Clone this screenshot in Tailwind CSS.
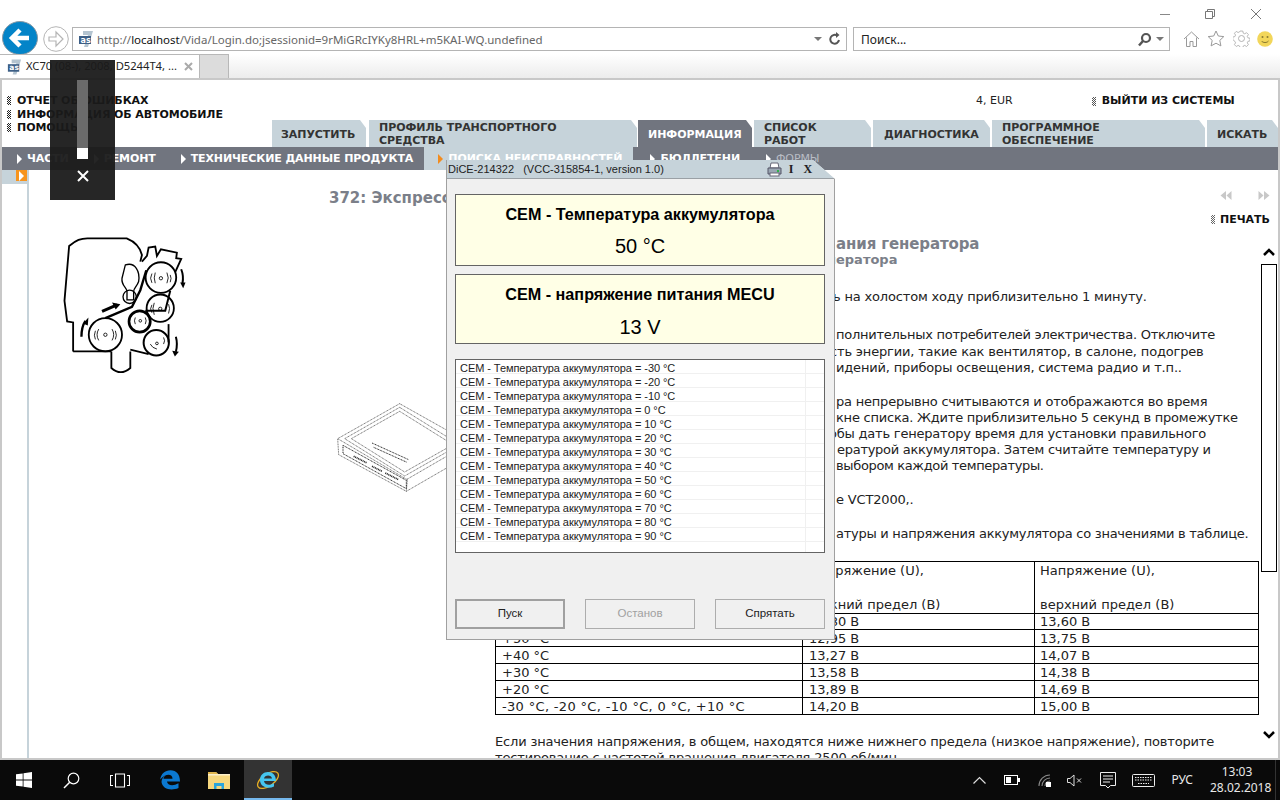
<!DOCTYPE html>
<html lang="ru">
<head>
<meta charset="UTF-8">
<title>VIDA</title>
<script src="https://cdn.jsdelivr.net/npm/@tailwindcss/browser@4"></script>
</head>
<body class="relative w-[1280px] h-[800px] overflow-hidden flex flex-col bg-white font-['DejaVu_Sans',sans-serif] text-black">

<!-- browser chrome -->
<div class="h-[54px] flex items-start font-['Noto_Sans',sans-serif] shrink-0">
  <svg class="ml-[2px] mt-[21px] shrink-0" width="36" height="34" viewBox="0 0 36 34"><ellipse cx="18" cy="17" rx="17.5" ry="16.5" fill="#0484c8" stroke="#8a9aa5" stroke-width="1"/><path d="M27 17H11M18 9l-8 8 8 8" fill="none" stroke="#fff" stroke-width="4.5"/></svg>
  <svg class="ml-[5px] mt-[26px] shrink-0" width="26" height="26" viewBox="0 0 26 26"><circle cx="13" cy="13" r="12.3" fill="#fff" stroke="#b5b5b5"/><path d="M6 11h7V6l7 7-7 7v-5H6z" fill="none" stroke="#b5b5b5" stroke-width="1.2"/></svg>
  <div class="ml-[3px] mt-[27px] w-[775px] h-[24px] border border-[#b4b4b4] flex items-center pl-[4px] pr-[4px] text-[11.5px] text-[#666] shrink-0">
    <svg width="18" height="18" viewBox="0 0 18 18" class="shrink-0"><path d="M6 1h10l-5 16H7l4-12H6z" fill="#b4c4d0"/><rect x="2" y="6" width="12" height="8" fill="#3d5f86"/><text x="3.5" y="12.5" font-size="8" font-weight="700" fill="#fff" font-family="DejaVu Sans">as</text></svg>
    <span class="ml-[2px] pt-[1px] whitespace-nowrap">http://<span class="text-[#111]">localhost</span>/Vida/Login.do;jsessionid=9rMiGRcIYKy8HRL+m5KAI-WQ.undefined</span>
    <span class="ml-auto w-0 h-0 border-x-[4px] border-x-transparent border-t-[4px] border-t-[#777]"></span>
    <svg class="ml-[6px]" width="14" height="16" viewBox="0 0 14 16"><path d="M11 9a4.4 4.4 0 1 1-1.6-4.2" fill="none" stroke="#555" stroke-width="2"/><path d="M8 1v6l3.500-3z" fill="#555"/></svg>
  </div>
  <div class="ml-[6px] mt-[27px] w-[317px] h-[24px] border border-[#b4b4b4] flex items-center pl-[7px] pr-[5px] text-[12px] text-[#222] shrink-0">
    <span class="pt-[1px]">Поиск...</span>
    <svg class="ml-auto" width="15" height="15" viewBox="0 0 15 15"><circle cx="9" cy="6" r="4" fill="none" stroke="#555" stroke-width="2.200"/><path d="M6 9l-4 4.500" stroke="#555" stroke-width="2.500"/></svg>
    <span class="ml-[4px] w-0 h-0 border-x-[4px] border-x-transparent border-t-[4px] border-t-[#777]"></span>
  </div>
  <div class="flex-1 relative h-full">
    <div class="flex items-start mt-[9px] ml-[-10px] h-[11px]">
      <span class="ml-[0px] mt-[5px] w-[10px] h-px bg-[#888]"></span>
      <svg class="ml-[35px]" width="10" height="10" viewBox="0 0 10 10"><path d="M.5 2.500h7v7h-7zM2.500 2.500v-2h7v7h-2" fill="none" stroke="#777"/></svg>
      <svg class="ml-[36px]" width="10" height="10" viewBox="0 0 10 10"><path d="M0 0l10 10M10 0L0 10" stroke="#777"/></svg>
    </div>
    <div class="flex items-center mt-[10px] ml-[13px]">
      <svg width="17" height="16" viewBox="0 0 16 16"><path d="M.5 8L8 1l7.500 7M3 6.500v9h3.500v-5h3v5H13v-9" fill="none" stroke="#999"/></svg>
      <svg class="ml-[7px]" width="18" height="17" viewBox="0 0 17 17"><path d="M8.500 1l2.300 5 5.500.6-4 3.800 1.100 5.500-4.900-2.700-4.900 2.700 1.100-5.500-4-3.800 5.500-.6z" fill="none" stroke="#999"/></svg>
      <svg class="ml-[8px]" width="17" height="17" viewBox="0 0 17 17"><path d="M7 .7h3l.5 2.300 1.600.7 2-1.200 2 2-1.200 2 .7 1.600 2.300.5-.1 2.800-2.200.5-.7 1.600 1.200 2-2 2-2-1.200-1.600.7-.5 2.200H7l-.5-2.200-1.600-.7-2 1.200-2-2 1.200-2-.7-1.600L-.9 10V7.200l2.300-.5.7-1.600-1.200-2 2-2 2 1.200 1.600-.7z" transform="translate(.6 .4) scale(.92)" fill="none" stroke="#aaa" stroke-width=".9"/><circle cx="8.500" cy="8.500" r="3" fill="none" stroke="#aaa" stroke-width=".9"/></svg>
      <svg class="ml-[7px]" width="16" height="16" viewBox="0 0 16 16"><circle cx="8" cy="8" r="7.800" fill="#f2d65a"/><circle cx="5.500" cy="6" r="1" fill="#8a7a30"/><circle cx="10.500" cy="6" r="1" fill="#8a7a30"/><path d="M4.500 10c1.500 2 5.500 2 7 0" fill="none" stroke="#8a7a30"/></svg>
    </div>
  </div>
</div>
<div class="h-[24px] flex bg-gradient-to-b from-white to-[#ececec] font-['Noto_Sans',sans-serif] shrink-0">
  <div class="w-[200px] bg-white border-r border-t border-[#b8b8b8] flex items-center pl-[6px] text-[11.2px] text-[#222]">
    <svg width="17" height="18" viewBox="0 0 18 18" class="shrink-0"><path d="M6 1h10l-5 16H7l4-12H6z" fill="#b4c4d0"/><rect x="2" y="6" width="12" height="8" fill="#3d5f86"/><text x="3.500" y="12.500" font-size="8" font-weight="700" fill="#fff" font-family="DejaVu Sans">as</text></svg>
    <span class="ml-[3px] whitespace-nowrap">XC70 (08-), 2008, D5244T4, ...</span>
    <svg class="ml-[7px]" width="9" height="9" viewBox="0 0 9 9"><path d="M1 1l7 7M8 1L1 8" stroke="#aaa" stroke-width="2"/></svg>
  </div>
  <div class="w-[29px] bg-[#dcdcdc] border-r border-t border-[#b8b8b8]"></div>
</div>

<!-- page -->
<div class="flex-1 min-h-0 flex flex-col border-x-2 border-y-2 border-[#c8c8c8]">
  <div class="h-[67px] flex shrink-0">
    <div class="w-[270px] pt-[14px] pl-[5px] text-[11px] font-bold leading-[13.500px] tracking-[-0.08px] text-[#111]">
      <div class="flex items-center gap-[6px]"><span class="w-[4px] h-[9px] bg-[length:2px_2px] bg-[conic-gradient(#222_25%,transparent_0_50%,#222_0_75%,transparent_0)]"></span>ОТЧЕТ ОБ ОШИБКАХ</div>
      <div class="flex items-center gap-[6px]"><span class="w-[4px] h-[9px] bg-[length:2px_2px] bg-[conic-gradient(#222_25%,transparent_0_50%,#222_0_75%,transparent_0)]"></span>ИНФОРМАЦИЯ ОБ АВТОМОБИЛЕ</div>
      <div class="flex items-center gap-[6px]"><span class="w-[4px] h-[9px] bg-[length:2px_2px] bg-[conic-gradient(#222_25%,transparent_0_50%,#222_0_75%,transparent_0)]"></span>ПОМОЩЬ</div>
    </div>
    <div class="flex-1 flex flex-col">
      <div class="h-[40px] flex items-start pt-[14px] text-[11px] leading-[14px]">
        <span class="ml-[704px] text-[#222]">4, EUR</span>
        <span class="ml-[79px] w-[4px] h-[9px] mt-[3px] bg-[length:2px_2px] bg-[conic-gradient(#555_25%,transparent_0_50%,#555_0_75%,transparent_0)]"></span>
        <span class="ml-[6px] font-bold whitespace-nowrap text-[#111]">ВЫЙТИ ИЗ СИСТЕМЫ</span>
      </div>
      <div class="h-[27px] flex text-[11px] font-bold leading-[13px] tracking-[-0.05px] text-[#333]">
        <div class="w-[94px] pl-[9px] pt-[1px] flex items-center bg-[#c6d3da] [clip-path:polygon(0_0,calc(100%-6px)_0,100%_8px,100%_100%,0_100%)]">ЗАПУСТИТЬ</div>
        <div class="ml-[3px] w-[268px] pl-[10px] flex items-center bg-[#c6d3da] [clip-path:polygon(0_0,calc(100%-6px)_0,100%_8px,100%_100%,0_100%)]">ПРОФИЛЬ ТРАНСПОРТНОГО<br>СРЕДСТВА</div>
        <div class="ml-[1px] w-[114px] pl-[10px] pt-[1px] flex items-center bg-[#71757f] text-white [clip-path:polygon(0_0,calc(100%-6px)_0,100%_8px,100%_100%,0_100%)]">ИНФОРМАЦИЯ</div>
        <div class="ml-[2px] w-[117px] pl-[10px] flex items-center bg-[#c6d3da] [clip-path:polygon(0_0,calc(100%-6px)_0,100%_8px,100%_100%,0_100%)]">СПИСОК<br>РАБОТ</div>
        <div class="ml-[2px] w-[117px] pl-[11px] pt-[1px] flex items-center bg-[#c6d3da] [clip-path:polygon(0_0,calc(100%-6px)_0,100%_8px,100%_100%,0_100%)]">ДИАГНОСТИКА</div>
        <div class="ml-[2px] w-[213px] pl-[10px] flex items-center bg-[#c6d3da] [clip-path:polygon(0_0,calc(100%-6px)_0,100%_8px,100%_100%,0_100%)]">ПРОГРАММНОЕ<br>ОБЕСПЕЧЕНИЕ</div>
        <div class="ml-[2px] flex-1 pl-[10px] pt-[1px] flex items-center bg-[#c6d3da] [clip-path:polygon(0_0,calc(100%-6px)_0,100%_8px,100%_100%,0_100%)]">ИСКАТЬ</div>
      </div>
    </div>
  </div>
  <div class="h-[23px] flex items-stretch bg-[#71757f] text-white text-[11px] font-bold tracking-[-0.1px] shrink-0 whitespace-nowrap">
    <div class="ml-[15px] pt-[1px] flex items-center gap-[5px]"><span class="w-0 h-0 border-y-[5px] border-y-transparent border-l-[5px] border-l-white"></span>ЧАСТИ</div>
    <div class="ml-[25px] pt-[1px] flex items-center gap-[5px]"><span class="w-0 h-0 border-y-[5px] border-y-transparent border-l-[5px] border-l-white"></span>РЕМОНТ</div>
    <div class="ml-[25px] pt-[1px] flex items-center gap-[5px]"><span class="w-0 h-0 border-y-[5px] border-y-transparent border-l-[5px] border-l-white"></span>ТЕХНИЧЕСКИЕ ДАННЫЕ ПРОДУКТА</div>
    <div class="ml-[11px] pl-[14px] pr-[11px] pt-[1px] flex items-center gap-[5px] bg-[#c6d3da]"><span class="w-0 h-0 border-y-[5px] border-y-transparent border-l-[5px] border-l-[#f28c1e]"></span>ПОИСКА НЕИСПРАВНОСТЕЙ</div>
    <div class="ml-[17px] pt-[1px] flex items-center gap-[5px]"><span class="w-0 h-0 border-y-[5px] border-y-transparent border-l-[5px] border-l-white"></span>БЮЛЛЕТЕНИ</div>
    <div class="ml-[26px] pt-[1px] flex items-center gap-[5px] font-normal text-[#b8bcc4]"><span class="w-0 h-0 border-y-[5px] border-y-transparent border-l-[5px] border-l-white"></span>ФОРМЫ</div>
  </div>

  <div class="flex-1 min-h-0 flex overflow-hidden">
    <aside class="w-[27px] shrink-0 border-r-2 border-[#c6d3da]">
      <div class="h-[14px] bg-[#c6d3da] flex items-start justify-end">
        <div class="w-[11px] h-[11px] bg-[#f7941d] flex items-center justify-center"><span class="w-0 h-0 border-y-[5px] border-y-transparent border-l-[5px] border-l-white"></span></div>
      </div>
    </aside>
    <div class="flex-1 min-w-0 flex flex-col">
      <div class="h-[66px] flex shrink-0">
        <h1 class="ml-[300px] mt-[19px] text-[15px] leading-[18px] font-bold text-[#7b7f89] whitespace-nowrap">372: Экспресс-проверка системы заряда генератора</h1>
        <div class="ml-auto w-[70px] pt-[21px] pr-[8px] flex flex-col items-end">
          <div class="flex w-[50px] justify-between">
            <svg width="12" height="9" viewBox="0 0 11 9"><path d="M5.500 0v9L0 4.500zM11 0v9L6 4.500z" fill="#c8c8c8"/></svg>
            <svg width="12" height="9" viewBox="0 0 11 9"><path d="M0 0v9l5-4.500zM5.500 0v9L11 4.500z" fill="#c8c8c8"/></svg>
          </div>
          <div class="mt-[13px] flex items-center gap-[5px] text-[11px] font-bold leading-[13px] text-[#111]"><span class="w-[4px] h-[9px] bg-[length:2px_2px] bg-[conic-gradient(#666_25%,transparent_0_50%,#666_0_75%,transparent_0)]"></span>ПЕЧАТЬ</div>
        </div>
      </div>
      <div class="flex-1 min-h-0 flex">
        <div class="w-[466px] shrink-0">
          <svg class="ml-[33px]" width="125" height="138" viewBox="185 105 375 415" fill="none" stroke="#000" stroke-width="5.500">
            <path d="M218 452V365l-18-3-8-62 14-165c22-18 35-23 55-23h118c20 8 40 25 46 50l-5 20"/>
            <path d="M425 182l15-17 5-25 20-3 5 28 12-20 48 10-2 17 15 2-18 40"/>
            <path d="M218 452h115M333 452v50q28 25 57 0v-50M390 447l55 13"/>
            <path d="M505 370v55"/>
            <circle cx="482" cy="230" r="46"/><circle cx="480" cy="322" r="41"/><circle cx="418" cy="362" r="32" stroke-width="8"/><circle cx="468" cy="426" r="38" stroke-width="6"/><circle cx="315" cy="402" r="50"/>
            <path d="M315 352L395 318l25-50 18-60" stroke-width="7"/><path d="M510 270l-15 60-60 0" stroke-width="6"/>
            <path d="M375 192c30-10 45 20 40 50-5 15-15 20-15 30v25h-20v-25c0-12-18-18-15-40z" stroke-width="4"/><circle cx="388" cy="288" r="20" stroke-width="4"/>
            <g stroke-width="2.500"><circle cx="482" cy="232" r="5"/><circle cx="480" cy="324" r="5"/><circle cx="420" cy="360" r="4"/><circle cx="470" cy="428" r="4"/><circle cx="315" cy="402" r="5"/>
            <path d="M455 218q-8 14 0 28M465 215q-6 16 0 32M500 215q8 16 0 32M510 222q5 10 0 22M295 385q-10 17 0 34M285 390q-6 14 0 26M335 385q10 17 0 34M345 390q6 14 0 26M455 312q-8 12 0 24M462 306q-8 16 0 36M505 310q6 12 0 28M405 350q-5 10 0 20M435 350q5 10 0 20M450 430q6 12 20 15M490 410q6 10 0 20"/></g>
            <path d="M305 332l45-20" stroke-width="9"/><path d="M335 305l25 5-14 16z" fill="#000" stroke="none"/>
            <path d="M243 408q0-30 12-48" stroke-width="7"/><path d="M248 368l16-18-2 24z" fill="#000" stroke="none"/>
            <path d="M543 205q8 20 4 42" stroke-width="6"/><path d="M540 245l16 0-7 17z" fill="#000" stroke="none"/>
            <path d="M527 408q6 22 0 45" stroke-width="6"/><path d="M516 450l20 3-12 14z" fill="#000" stroke="none"/>
          </svg>
          <svg class="ml-[308px] mt-[29px]" width="160" height="90" viewBox="1010 605 480 270" fill="none" stroke="#222" stroke-width="2" stroke-dasharray="3 2">
            <path d="M1198 607L1012 712l3 48 203 110 3-35L1012 712M1198 607l210 118-190 110M1218 870l190-110v-35"/>
            <path d="M1198 630l-145 82 160 100 145-82z"/><path d="M1198 618l-165 94 180 112 165-94z"/>
            <path d="M1028 732v25l190 105v-25zM1115 725l110 50M1120 738l100 45" stroke-width="3"/><path d="M1060 765l40 20M1115 795l30 15M1155 815l40 20" stroke-width="5"/>
          </svg>
        </div>
        <article class="w-[763px] shrink-0 text-[13px] leading-[16px] text-[#222] whitespace-nowrap">
          <h2 class="pl-[341px] text-[15px] leading-[16px] font-bold tracking-[-0.12px] text-[#7b7f89]">ания генератора</h2>
          <h3 class="pl-[332px] text-[13px] leading-[16px] font-bold text-[#7b7f89]">нератора</h3>
          <p class="mt-[21px] pl-[338px] tracking-[-0.17px]">ь на холостом ходу приблизительно 1 минуту.</p>
          <p class="mt-[22px] leading-[16.500px] tracking-[-0.17px]">
            <span class="block pl-[341px] tracking-[-0.25px]">полнительных потребителей электричества. Отключите</span>
            <span class="block pl-[335px]">сть энергии, такие как вентилятор, в салоне, подогрев</span>
            <span class="block pl-[341px]">идений, приборы освещения, система радио и т.п..</span>
          </p>
          <p class="mt-[17px]">
            <span class="block pl-[341px] tracking-[-0.21px]">ра непрерывно считываются и отображаются во время</span>
            <span class="block pl-[341px] tracking-[-0.23px]">кне списка. Ждите приблизительно 5 секунд в промежутке</span>
            <span class="block pl-[334px] tracking-[-0.21px]">обы дать генератору время для установки правильного</span>
            <span class="block pl-[342px] tracking-[-0.28px]">ературой аккумулятора. Затем считайте температуру и</span>
            <span class="block pl-[341px] tracking-[-0.35px]">выбором каждой температуры.</span>
          </p>
          <p class="mt-[18px] pl-[341px] tracking-[-0.17px]">е VCT2000,.</p>
          <p class="mt-[18px] pl-[341px] tracking-[-0.27px]">атуры и напряжения аккумулятора со значениями в таблице.</p>
          <table class="mt-[19px] w-[763px] table-fixed border-collapse border border-black">
            <colgroup><col class="w-[307px]"><col class="w-[232px]"><col class="w-[224px]"></colgroup>
            <tbody class="[&_td]:border [&_td]:border-black [&_td]:px-[6px] [&_td]:h-[17px] [&_td]:py-0">
              <tr><td></td><td class="align-top leading-[17.200px]">Напряжение (U),<br><br>нижний предел (В)</td><td class="align-top leading-[17.200px] !pl-[5px]">Напряжение (U),<br><br>верхний предел (В)</td></tr>
              <tr class="leading-[15px]"><td class="!h-[16px]"></td><td class="!h-[16px]">12,80 В</td><td class="!h-[16px] !pl-[5px]">13,60 В</td></tr>
              <tr class="leading-[15px] [&_td]:pt-px"><td>+50 °C</td><td>12,95 В</td><td class="!pl-[5px]">13,75 В</td></tr>
              <tr class="leading-[15px] [&_td]:pt-px"><td>+40 °C</td><td>13,27 В</td><td class="!pl-[5px]">14,07 В</td></tr>
              <tr class="leading-[15px] [&_td]:pt-px"><td>+30 °C</td><td>13,58 В</td><td class="!pl-[5px]">14,38 В</td></tr>
              <tr class="leading-[15px] [&_td]:pt-px"><td>+20 °C</td><td>13,89 В</td><td class="!pl-[5px]">14,69 В</td></tr>
              <tr class="leading-[15px] [&_td]:pt-px"><td class="tracking-[0.33px]">-30 °C, -20 °C, -10 °C, 0 °C, +10 °C</td><td>14,20 В</td><td class="!pl-[5px]">15,00 В</td></tr>
            </tbody>
          </table>
          <p class="mt-[19px] tracking-[-0.16px]">Если значения напряжения, в общем, находятся ниже нижнего предела (низкое напряжение), повторите<br>тестирование с частотой вращения двигателя 2500 об/мин.</p>
        </article>
        <div class="ml-[3px] w-[16px] shrink-0 flex flex-col items-center">
          <svg class="mt-[12px]" width="12" height="8" viewBox="0 0 12 8"><path d="M1 7l5-5 5 5" fill="none" stroke="#000" stroke-width="2.500"/></svg>
          <div class="mt-[8px] w-[16px] h-[308px] border border-black bg-white"></div>
          <svg class="mt-[159px]" width="12" height="8" viewBox="0 0 12 8"><path d="M1 1l5 5 5-5" fill="none" stroke="#000" stroke-width="2.500"/></svg>
        </div>
      </div>
    </div>
  </div>
</div>

<!-- taskbar -->
<div class="h-[40px] shrink-0 flex items-stretch bg-[#0a0a0a] text-[#e8e8e8] font-['Noto_Sans',sans-serif]">
  <svg class="ml-[16px] mt-[12px]" width="16" height="16" viewBox="0 0 16 16"><path d="M0 2.300l6.700-.9v6.200H0zM7.500 1.300L16 0v7.600H7.500zM0 8.400h6.700v6.200L0 13.700zM7.500 8.400H16V16l-8.500-1.300z" fill="#fff"/></svg>
  <svg class="ml-[31px] mt-[12px]" width="17" height="17" viewBox="0 0 17 17"><circle cx="10.500" cy="6.500" r="5.300" fill="none" stroke="#fff" stroke-width="1.200"/><path d="M6.700 10.300L1 16" stroke="#fff" stroke-width="1.500"/></svg>
  <svg class="ml-[30px] mt-[13px]" width="20" height="15" viewBox="0 0 20 15"><path d="M5.500 1h9v13h-9zM3 2.500H.5v10H3M17 2.500h2.500v10H17" fill="none" stroke="#fff" stroke-width="1.100"/></svg>
  <svg class="ml-[30px] mt-[10px]" width="20" height="20" viewBox="0 0 20 20"><path d="M.2 9.500C1 4 5 .3 10.500.3 16.500.3 20 4.500 20 11.500H7c.3 4 6 5 11.500 1.800v4.700c-7 3-16 1.500-17-6 0-3 2-5.500 4-6.500-1 1-1.800 2-2 3.200h9c0-4.500-6-6-12.300.8z" fill="#0b78d0"/></svg>
  <svg class="ml-[28px] mt-[11px]" width="22" height="18" viewBox="0 0 22 18"><path d="M0 1h8l2 2h12v15H0z" fill="#f6d77e"/><path d="M0 1h8l2 2H0z" fill="#e0b64e"/><path d="M6 12h10v6h-2.500v-3h-5v3H6z" fill="#2aa5dc"/><rect x="0" y="3" width="22" height="1.500" fill="#fff" opacity=".6"/></svg>
  <div class="ml-[14px] w-[48px] relative bg-[#333] flex justify-center border-b-2 border-[#76b9ed]">
    <svg class="mt-[8px]" width="24" height="24" viewBox="0 0 24 24"><ellipse cx="12" cy="12" rx="12" ry="6" transform="rotate(-35 12 12)" fill="none" stroke="#e8b024" stroke-width="1.300"/><path d="M4 12c0-5 3.500-8 8-8s8 3 8 9H8c.3 4 6 5 10 2v3.500c-6 3-14 .5-14-6.500zm4-1.500h8c-.3-4-7.500-4-8 0z" fill="#45c6f0"/></svg>
  </div>
  <div class="ml-auto flex items-center">
    <svg width="13" height="8" viewBox="0 0 13 8"><path d="M.5 7.500l6-6 6 6" fill="none" stroke="#ddd" stroke-width="1.200"/></svg>
    <svg class="ml-[18px]" width="16" height="10" viewBox="0 0 16 10"><rect x=".5" y=".5" width="13" height="9" fill="none" stroke="#fff"/><rect x="2" y="2" width="5" height="6" fill="#fff"/><rect x="14" y="3" width="2" height="4" fill="#fff"/></svg>
    <svg class="ml-[18px]" width="13" height="13" viewBox="0 0 13 13"><path d="M1 12A11 11 0 0 1 12 1M4 12A8 8 0 0 1 12 4M7 12A5 5 0 0 1 12 7" fill="none" stroke="#888" stroke-width="1.100"/><rect x="8" y="8" width="5" height="5" fill="#fff"/></svg>
    <svg class="ml-[16px]" width="15" height="13" viewBox="0 0 15 13"><path d="M.5 4.500h2.500L7 1v11L3 8.500H.5z" fill="none" stroke="#ddd"/><path d="M10 4.500l4 4M14 4.500l-4 4" stroke="#ddd"/></svg>
    <svg class="ml-[18px]" width="16" height="17" viewBox="0 0 16 17"><path d="M.5.500h15v13h-5l-2.500 2.500-2.500-2.500h-5z" fill="none" stroke="#eee"/><path d="M3 4h10M3 7h10M3 10h7" stroke="#eee"/></svg>
    <svg class="ml-[16px]" width="23" height="13" viewBox="0 0 23 13"><rect x=".5" y=".5" width="22" height="12" rx="1" fill="none" stroke="#eee"/><path d="M3 3.500h17M3 6h17M6 9.500h11" stroke="#eee" stroke-dasharray="1.500 1"/></svg>
    <span class="ml-[16px] text-[12px] leading-none">РУС</span>
    <div class="ml-[17px] w-[54px] text-center text-[12px] leading-[16px] whitespace-nowrap">13:03<br>28.02.2018</div>
    <span class="ml-[11px] w-px h-full bg-[#333]"></span>
    <span class="w-[4px]"></span>
  </div>
</div>

<!-- volume overlay -->
<div class="absolute left-[50px] top-[60px] w-[65px] h-[140px] bg-[#1a1a1a]/95 flex flex-col items-center z-20">
  <div class="mt-[20px] w-[11px] h-[68px] bg-[#6b6b6b]"></div>
  <div class="w-[11px] h-[11px] bg-white"></div>
  <svg class="mt-[11px]" width="12" height="12" viewBox="0 0 12 12"><path d="M1 1l10 10M11 1L1 11" stroke="#fff" stroke-width="2"/></svg>
</div>

<!-- DiCE dialog -->
<div class="absolute left-[446px] top-[160px] w-[389px] h-[480px] z-10 bg-[#f0f0f0] border-x border-b border-[#a0a0a0] flex flex-col font-['Liberation_Sans',sans-serif] [clip-path:polygon(0_0,calc(100%-22px)_0,100%_19px,100%_100%,0_100%)]">
  <div class="h-[19px] shrink-0 bg-[#c6d3da] border-b border-[#9aa0a5] flex items-center pl-px text-[11px] text-[#222] whitespace-pre">
    <span>DiCE-214322   (VCC-315854-1, version 1.0)</span>
    <svg class="ml-[103px]" width="15" height="15" viewBox="0 0 15 15"><path d="M4 1h7l1 5H3z" fill="#fff" stroke="#667"/><path d="M1 6h13v6H1z" fill="#9aa6b2" stroke="#556"/><rect x="3" y="11" width="9" height="3" fill="#fff" stroke="#667"/><rect x="10" y="8" width="2" height="2" fill="#2fb34a"/></svg>
    <span class="ml-[7px] font-['Liberation_Serif',serif] font-bold text-[12px]">I</span>
    <span class="ml-[10px] font-['Liberation_Serif',serif] font-bold text-[12px]">X</span>
  </div>
  <div class="pl-[8px] pr-[9px] flex-1 flex flex-col">
    <div class="mt-[15px] h-[72px] shrink-0 border border-[#646464] bg-[#ffffe6] flex flex-col items-center pt-[10px]">
      <div class="text-[16.2px] leading-[18px] font-bold">CEM - Температура аккумулятора</div>
      <div class="mt-[11px] text-[20px] leading-[24px]">50 °C</div>
    </div>
    <div class="mt-[8px] h-[70px] shrink-0 border border-[#646464] bg-[#ffffe6] flex flex-col items-center pt-[10px]">
      <div class="text-[16.2px] leading-[18px] font-bold">CEM - напряжение питания MECU</div>
      <div class="mt-[12px] text-[20px] leading-[24px]">13 V</div>
    </div>
    <div class="mt-[15px] h-[194px] shrink-0 border border-[#646464] bg-white flex flex-col text-[11px] leading-[16px] tracking-[-0.06px] text-[#222]">
      <div class="h-[14px] border-b border-[#f0f0f0] flex"><span class="w-[350px] pl-[4px] border-r border-[#f0f0f0]">CEM - Температура аккумулятора = -30 °C</span></div>
      <div class="h-[14px] border-b border-[#f0f0f0] flex"><span class="w-[350px] pl-[4px] border-r border-[#f0f0f0]">CEM - Температура аккумулятора = -20 °C</span></div>
      <div class="h-[14px] border-b border-[#f0f0f0] flex"><span class="w-[350px] pl-[4px] border-r border-[#f0f0f0]">CEM - Температура аккумулятора = -10 °C</span></div>
      <div class="h-[14px] border-b border-[#f0f0f0] flex"><span class="w-[350px] pl-[4px] border-r border-[#f0f0f0]">CEM - Температура аккумулятора = 0 °C</span></div>
      <div class="h-[14px] border-b border-[#f0f0f0] flex"><span class="w-[350px] pl-[4px] border-r border-[#f0f0f0]">CEM - Температура аккумулятора = 10 °C</span></div>
      <div class="h-[14px] border-b border-[#f0f0f0] flex"><span class="w-[350px] pl-[4px] border-r border-[#f0f0f0]">CEM - Температура аккумулятора = 20 °C</span></div>
      <div class="h-[14px] border-b border-[#f0f0f0] flex"><span class="w-[350px] pl-[4px] border-r border-[#f0f0f0]">CEM - Температура аккумулятора = 30 °C</span></div>
      <div class="h-[14px] border-b border-[#f0f0f0] flex"><span class="w-[350px] pl-[4px] border-r border-[#f0f0f0]">CEM - Температура аккумулятора = 40 °C</span></div>
      <div class="h-[14px] border-b border-[#f0f0f0] flex"><span class="w-[350px] pl-[4px] border-r border-[#f0f0f0]">CEM - Температура аккумулятора = 50 °C</span></div>
      <div class="h-[14px] border-b border-[#f0f0f0] flex"><span class="w-[350px] pl-[4px] border-r border-[#f0f0f0]">CEM - Температура аккумулятора = 60 °C</span></div>
      <div class="h-[14px] border-b border-[#f0f0f0] flex"><span class="w-[350px] pl-[4px] border-r border-[#f0f0f0]">CEM - Температура аккумулятора = 70 °C</span></div>
      <div class="h-[14px] border-b border-[#f0f0f0] flex"><span class="w-[350px] pl-[4px] border-r border-[#f0f0f0]">CEM - Температура аккумулятора = 80 °C</span></div>
      <div class="h-[14px] border-b border-[#f0f0f0] flex"><span class="w-[350px] pl-[4px] border-r border-[#f0f0f0]">CEM - Температура аккумулятора = 90 °C</span></div>
      <div class="flex-1 w-[350px] border-r border-[#f0f0f0]"></div>
    </div>
    <div class="mt-[46px] flex justify-between text-[11.5px] text-[#222]">
      <div class="w-[110px] h-[30px] border-2 border-[#a0a0a0] flex items-center justify-center">Пуск</div>
      <div class="w-[110px] h-[30px] border border-[#adadad] flex items-center justify-center text-[#a0a0a0]">Останов</div>
      <div class="w-[110px] h-[30px] border border-[#adadad] flex items-center justify-center">Спрятать</div>
    </div>
  </div>
</div>
</body>
</html>
